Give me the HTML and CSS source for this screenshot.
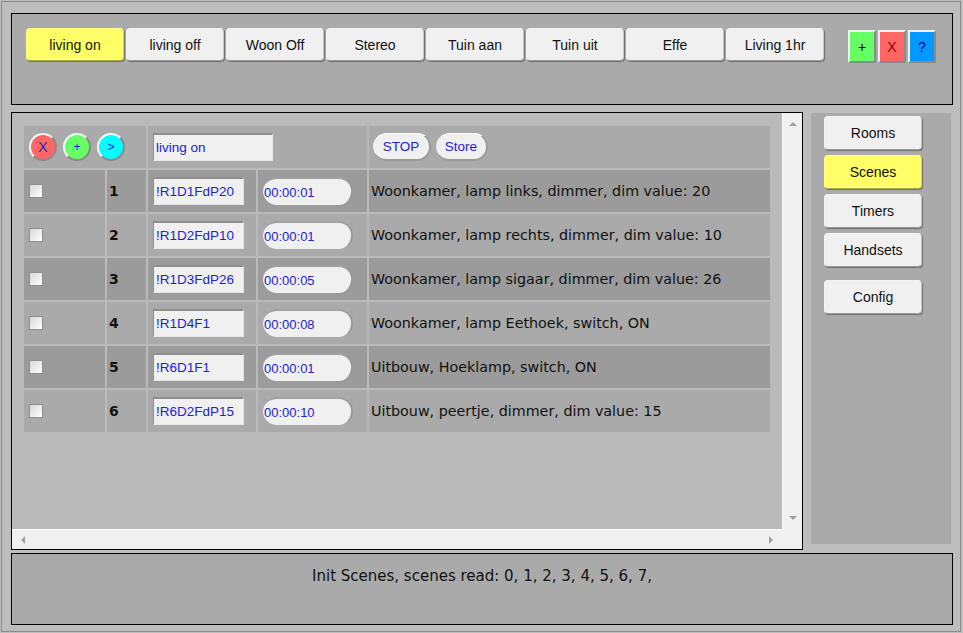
FILE: index.html
```html
<!DOCTYPE html>
<html>
<head>
<meta charset="utf-8">
<link rel="stylesheet" href="styles.css">
</head>
<body>
<div class="frame">
  <div class="top">
    <div class="scenes">
      <button class="btn on">living on</button>
      <button class="btn">living off</button>
      <button class="btn">Woon Off</button>
      <button class="btn">Stereo</button>
      <button class="btn">Tuin aan</button>
      <button class="btn">Tuin uit</button>
      <button class="btn">Effe</button>
      <button class="btn">Living 1hr</button>
    </div>
    <div class="tools">
      <button class="tool add">+</button>
      <button class="tool del">X</button>
      <button class="tool help">?</button>
    </div>
  </div>
  <div class="middle">
    <div class="main">
      <div class="view">
        <table class="grid">
          <colgroup>
            <col class="c1"><col class="c2"><col class="c3"><col class="c4"><col class="c5">
          </colgroup>
          <thead>
            <tr>
              <th colspan="2"><div class="rounds"><span class="rnd red">X</span><span class="rnd green">+</span><span class="rnd cyan">&gt;</span></div></th>
              <th colspan="2"><div class="cellpad"><span class="inp name">living on</span></div></th>
              <th><div class="pills"><span class="pill stop">STOP</span><span class="pill store">Store</span></div></th>
            </tr>
          </thead>
          <tbody>
            <tr>
              <td><span class="chk"></span></td><td class="num">1</td>
              <td><span class="inp code">!R1D1FdP20</span></td>
              <td><span class="inp time">00:00:01</span></td>
              <td class="desc">Woonkamer, lamp links, dimmer, dim value: 20</td>
            </tr>
            <tr>
              <td><span class="chk"></span></td><td class="num">2</td>
              <td><span class="inp code">!R1D2FdP10</span></td>
              <td><span class="inp time">00:00:01</span></td>
              <td class="desc">Woonkamer, lamp rechts, dimmer, dim value: 10</td>
            </tr>
            <tr>
              <td><span class="chk"></span></td><td class="num">3</td>
              <td><span class="inp code">!R1D3FdP26</span></td>
              <td><span class="inp time">00:00:05</span></td>
              <td class="desc">Woonkamer, lamp sigaar, dimmer, dim value: 26</td>
            </tr>
            <tr>
              <td><span class="chk"></span></td><td class="num">4</td>
              <td><span class="inp code">!R1D4F1</span></td>
              <td><span class="inp time">00:00:08</span></td>
              <td class="desc">Woonkamer, lamp Eethoek, switch, ON</td>
            </tr>
            <tr>
              <td><span class="chk"></span></td><td class="num">5</td>
              <td><span class="inp code">!R6D1F1</span></td>
              <td><span class="inp time">00:00:01</span></td>
              <td class="desc">Uitbouw, Hoeklamp, switch, ON</td>
            </tr>
            <tr>
              <td><span class="chk"></span></td><td class="num">6</td>
              <td><span class="inp code">!R6D2FdP15</span></td>
              <td><span class="inp time">00:00:10</span></td>
              <td class="desc">Uitbouw, peertje, dimmer, dim value: 15</td>
            </tr>
          </tbody>
        </table>
      </div>
      <div class="vbar"><span class="arr up"></span><span class="arr down"></span></div>
      <div class="hbar"><span class="arr left"></span><span class="arr right"></span></div>
      <div class="corner"></div>
    </div>
    <div class="side">
      <button class="btn nav">Rooms</button>
      <button class="btn nav on">Scenes</button>
      <button class="btn nav">Timers</button>
      <button class="btn nav">Handsets</button>
      <button class="btn nav config">Config</button>
    </div>
  </div>
  <div class="status">Init Scenes, scenes read: 0, 1, 2, 3, 4, 5, 6, 7,</div>
</div>
</body>
</html>
```
FILE: styles.css
```css
* { box-sizing: border-box; }
body {
  margin: 0;
  background: #bdbdbd;
  font-family: "Liberation Sans", Arial, sans-serif;
}
.frame {
  margin: 1px;
  width: 960px;
  height: 631px;
  border: 1px solid #8c8c8c;
  padding: 11px 0 0 9px;
}
.top {
  width: 942px;
  height: 92px;
  border: 1px solid #000;
  background: #aaaaaa;
  display: flex;
  align-items: flex-start;
  padding: 14px 0 0 14px;
}
.scenes { display: flex; gap: 2px; }
.btn {
  width: 98px;
  height: 33px;
  margin: 0;
  padding: 0;
  border: 1px solid #f4f4f4;
  border-right-color: #c8c8c8;
  border-bottom-color: #9a9a9a;
  border-radius: 4px;
  background: #f0f0f0;
  box-shadow: 1px 1px 1px rgba(0,0,0,0.35);
  font-family: "Liberation Sans", Arial, sans-serif;
  font-size: 14px;
  color: #111;
}
.btn.on { background: #ffff66; border-color: #ffff88 #d8d860 #a8a840 #ffff88; }
.tools { display: flex; gap: 2px; margin: 2px 0 0 24px; }
.tool {
  width: 28px;
  height: 33px;
  margin: 0;
  padding: 0;
  border: 2px solid;
  border-color: #f2f2f2 #8a8a8a #8a8a8a #f2f2f2;
  font-family: "Liberation Sans", Arial, sans-serif;
  font-size: 14px;
}
.tool.add { background: #66ff66; color: #000; }
.tool.del { background: #ff6666; color: #990000; }
.tool.help { background: #0099ff; color: #000080; }

.middle { display: flex; gap: 8px; margin-top: 7px; }
.main {
  width: 792px;
  height: 438px;
  border: 1px solid #000;
  background: #bababa;
  display: grid;
  grid-template-columns: 770px 20px;
  grid-template-rows: 416px 20px;
}
.view { padding: 11px 10px 0 10px; overflow: hidden; }
.grid {
  width: 750px;
  table-layout: fixed;
  border-collapse: separate;
  border-spacing: 2px;
}
.c1 { width: 81px; }
.c2 { width: 39px; }
.c3 { width: 108px; }
.c4 { width: 109px; }
.c5 { width: 401px; }
.grid th, .grid td {
  padding: 0;
  height: 42px;
  text-align: left;
  font-weight: normal;
  vertical-align: middle;
}
.grid thead tr { background: #aaaaaa; }
.grid tbody tr:nth-child(odd) { background: #9b9b9b; }
.grid tbody tr:nth-child(even) { background: #aaaaaa; }

.rounds { display: flex; gap: 6px; padding-left: 5px; }
.rnd {
  width: 28px;
  height: 28px;
  border-radius: 50%;
  border: 2px solid;
  border-color: #f4f4f4 #8a8a8a #8a8a8a #f4f4f4;
  display: flex;
  align-items: center;
  justify-content: center;
  color: #2020c8;
  font-size: 14px;
}
.rnd.red { background: #ff6666; }
.rnd.green { background: #66ff66; font-size: 12px; }
.rnd.cyan { background: #00ffff; font-size: 12px; }

.cellpad { padding-left: 5px; }
.inp {
  display: flex;
  align-items: center;
  height: 28px;
  background: #f0f0f0;
  color: #2222cc;
  font-size: 13px;
  padding-left: 2px;
  border-top: 2px solid #8e8e8e;
  border-left: 1px solid #8e8e8e;
  border-right: 1px solid #e6e6e6;
  border-bottom: 1px solid #e6e6e6;
}
.inp.name { width: 120px; font-size: 13.5px; }
.inp.code { width: 91px; margin-left: 5px; font-size: 13.5px; }
.inp.time {
  width: 90px;
  margin-left: 5px;
  border-radius: 14px;
  border: none;
  border-top: 2px solid #a0a0a0;
  border-right: 2px solid #9a9a9a;
  padding-left: 1px;
}
.pills { display: flex; gap: 5px; padding-left: 4px; }
.pill {
  height: 28px;
  display: flex;
  align-items: center;
  justify-content: center;
  background: #f0f0f0;
  color: #2222cc;
  font-size: 13.5px;
  border-radius: 14px;
  border-right: 2px solid #9a9a9a;
  border-bottom: 2px solid #9a9a9a;
  border-top: 1px solid #fff;
}
.pill.stop { width: 58px; }
.pill.store { width: 52px; }

.chk {
  display: block;
  width: 14px;
  height: 14px;
  margin-left: 5px;
  border: 1px solid #8f8f8f;
  background: linear-gradient(135deg, #d8d8d8, #ffffff);
}
.num, .desc, .status {
  font-family: "DejaVu Sans", sans-serif;
  color: #111;
}
.num { font-size: 14px; font-weight: bold !important; padding-left: 2px !important; }
.desc { font-size: 14.3px; padding-left: 2px !important; white-space: nowrap; }

.vbar {
  background: #f0f0f0;
  border-left: 1px solid #fafafa;
  display: flex;
  flex-direction: column;
  justify-content: space-between;
  align-items: center;
  padding: 9px 0 9px;
}
.hbar {
  background: #f0f0f0;
  border-top: 1px solid #fafafa;
  display: flex;
  justify-content: space-between;
  align-items: center;
  padding: 0 9px;
}
.corner { background: #f0f0f0; }
.arr { width: 0; height: 0; display: block; }
.arr.up { border-left: 4px solid transparent; border-right: 4px solid transparent; border-bottom: 4px solid #a0a0a0; }
.arr.down { border-left: 4px solid transparent; border-right: 4px solid transparent; border-top: 4px solid #a0a0a0; }
.arr.left { border-top: 4px solid transparent; border-bottom: 4px solid transparent; border-right: 4px solid #a0a0a0; }
.arr.right { border-top: 4px solid transparent; border-bottom: 4px solid transparent; border-left: 4px solid #a0a0a0; }

.side {
  width: 140px;
  height: 431px;
  margin-top: 1px;
  background: #aaaaaa;
  padding: 3px 0 0 13px;
  display: flex;
  flex-direction: column;
  gap: 5px;
}
.btn.nav { height: 34px; }
.btn.config { margin-top: 8px; }

.status {
  width: 942px;
  height: 72px;
  margin-top: 3px;
  border: 1px solid #000;
  background: #aaaaaa;
  text-align: center;
  font-size: 15px;
  padding-top: 13px;
}
```
